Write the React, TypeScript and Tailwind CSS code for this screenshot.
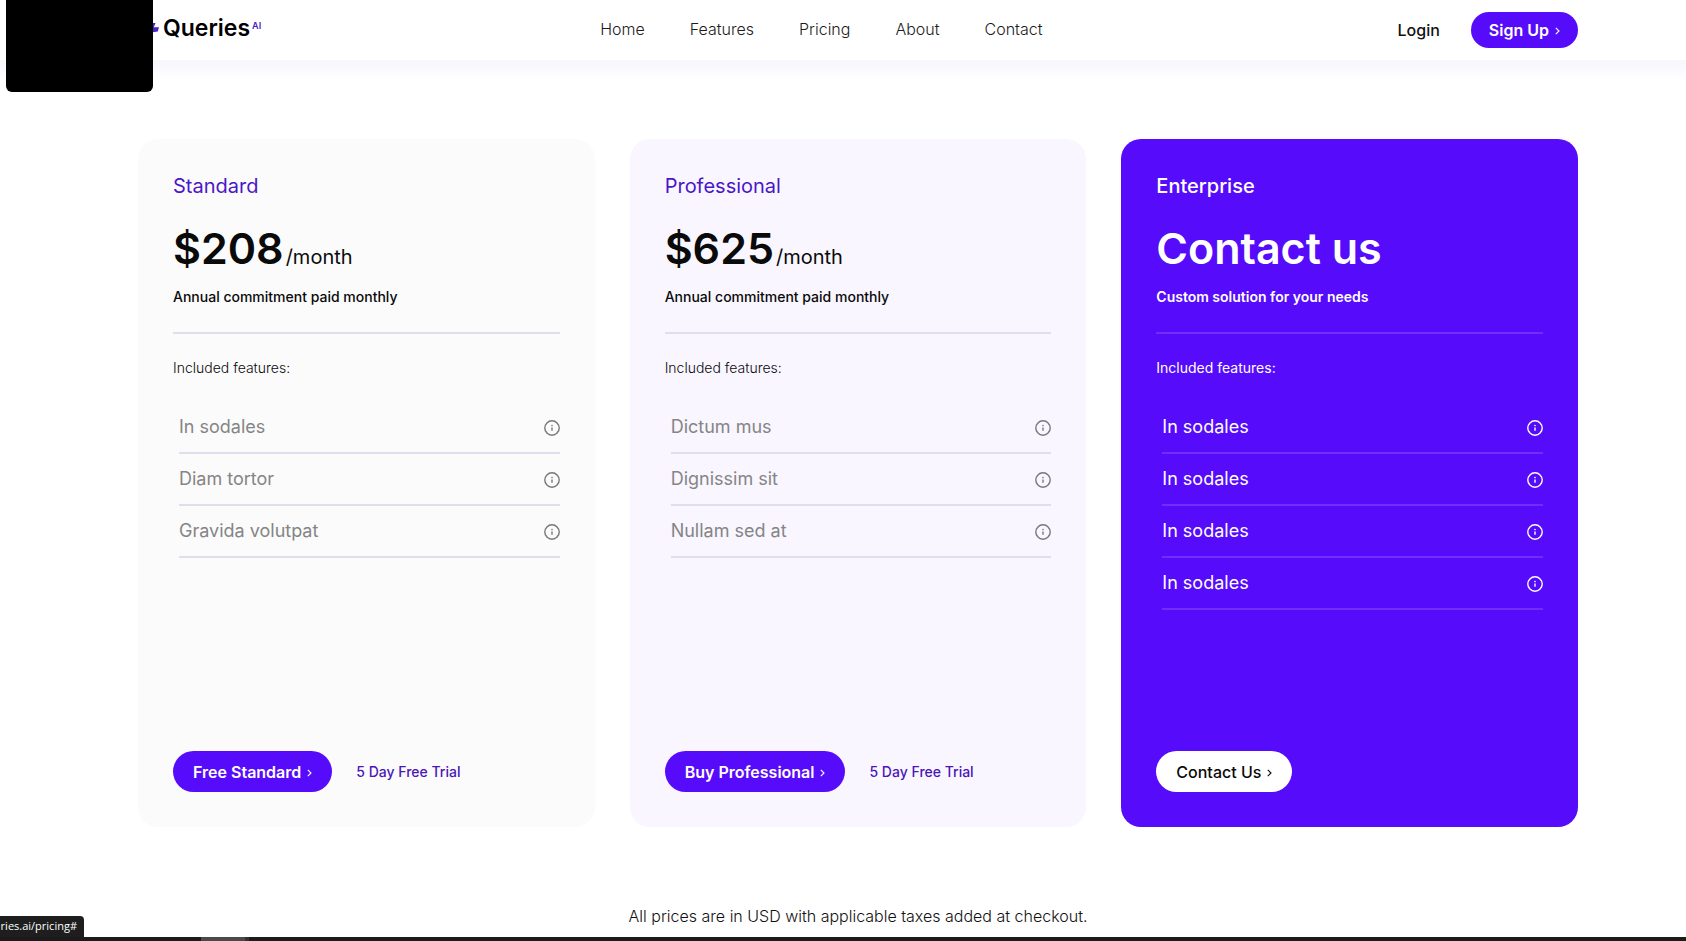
import React from 'react';
import { clsx } from 'clsx';

interface Plan {
  name: string;
  price: string;
  period?: string;
  note: string;
  features: string[];
  cta: string;
  trial?: boolean;
  background: string;
  dark?: boolean;
}

const NAV_LINKS = ['Home', 'Features', 'Pricing', 'About', 'Contact'];

const PLANS: Plan[] = [
  {
    name: 'Standard',
    price: '$208',
    period: '/month',
    note: 'Annual commitment paid monthly',
    features: ['In sodales', 'Diam tortor', 'Gravida volutpat'],
    cta: 'Free Standard',
    trial: true,
    background: 'bg-[#fbfbfc]',
  },
  {
    name: 'Professional',
    price: '$625',
    period: '/month',
    note: 'Annual commitment paid monthly',
    features: ['Dictum mus', 'Dignissim sit', 'Nullam sed at'],
    cta: 'Buy Professional',
    trial: true,
    background: 'bg-[#f9f6ff]',
  },
  {
    name: 'Enterprise',
    price: 'Contact us',
    note: 'Custom solution for your needs',
    features: ['In sodales', 'In sodales', 'In sodales', 'In sodales'],
    cta: 'Contact Us',
    background: 'bg-[#560bfb]',
    dark: true,
  },
];

const InfoIcon: React.FC = () => (
  <svg width="16" height="16" viewBox="0 0 16 16" fill="none" aria-hidden="true">
    <circle cx="8" cy="8" r="7.2" stroke="currentColor" strokeWidth="1.4" />
    <path d="M8 7.4v3.4" stroke="currentColor" strokeWidth="1.4" />
    <circle cx="8" cy="5.6" r="0.8" fill="currentColor" />
  </svg>
);

const Chevron: React.FC = () => (
  <svg width="5" height="8" viewBox="0 0 5 8" fill="none" className="mt-[2px]" aria-hidden="true">
    <path d="M0.8 0.8 4 4 0.8 7.2" stroke="currentColor" strokeWidth="1.1" />
  </svg>
);

const Header: React.FC = () => (
  <header className="relative h-[60px] bg-white shadow-[0_4px_12px_8px_#f8f7fe]">
    <div className="flex h-full items-center justify-between pl-[151px] pr-[108px]">
      <a href="#" className="flex items-center gap-1 pb-1 text-black">
        <svg width="8" height="10" viewBox="0 0 8 10" aria-hidden="true">
          <path d="M0 0h4.6L2.8 4.2H8L6.8 8.4 0 9.4z" fill="#4a22c4" />
        </svg>
        <span className="text-[23px] leading-7 font-semibold">Queries</span>
        <span className="-ml-0.5 pb-1 text-[9px] leading-3 font-semibold text-[#4a22c4]">AI</span>
      </a>
      <nav className="flex gap-[45px] pb-0.5 text-base font-light text-[#1c1c1c]">
        {NAV_LINKS.map((link) => (
          <a key={link} href="#">{link}</a>
        ))}
      </nav>
      <div className="flex items-center gap-[31px] pl-4">
        <a href="#" className="text-base font-medium text-[#111]">Login</a>
        <button className="flex h-9 items-center gap-1.5 rounded-full bg-[#560bfb] px-[18px] text-base font-semibold text-white">
          Sign Up <Chevron />
        </button>
      </div>
    </div>
  </header>
);

const PlanCard: React.FC<{ plan: Plan }> = ({ plan }) => {
  const line = plan.dark ? 'border-[#762cff]' : 'border-[#e0deec]';

  return (
    <article
      className={clsx(
        'flex min-h-[688px] flex-col rounded-[20px] p-[35px]',
        plan.background,
        plan.dark ? 'text-white' : 'text-[#0a0a0a]',
      )}
    >
      <h2 className={clsx('text-xl leading-6', plan.dark ? 'font-medium' : 'text-[#4b16c8]')}>{plan.name}</h2>
      <p className="mt-[22px] flex items-baseline gap-0.5">
        <span className="text-[43px] leading-14 font-semibold">{plan.price}</span>
        {plan.period && <span className="text-xl leading-6">{plan.period}</span>}
      </p>
      <p className={clsx('mt-[11px] text-sm', plan.dark ? 'font-semibold' : 'font-medium')}>{plan.note}</p>
      <hr className={clsx('mt-[25px] border-t-2', line)} />
      <p className={clsx('mt-6 text-sm', plan.dark ? 'font-normal' : 'font-light')}>Included features:</p>
      <ul className={clsx('mt-6 ml-1.5', !plan.dark && 'text-[#858585]')}>
        {plan.features.map((feature, idx) => (
          <li key={idx} className={clsx('flex h-[52px] items-center justify-between border-b-2 text-lg', line)}>
            {feature}
            <button aria-label={`About ${feature}`} className={clsx('pt-0.5', plan.dark ? 'text-white' : 'text-[#777]')}>
              <InfoIcon />
            </button>
          </li>
        ))}
      </ul>
      <div className="mt-auto flex items-center gap-6">
        <button
          className={clsx(
            'flex h-[41px] items-center gap-1.5 rounded-full px-5 text-base',
            plan.dark ? 'bg-white font-medium text-[#0a0a0a]' : 'bg-[#560bfb] font-semibold text-white',
          )}
        >
          {plan.cta} <Chevron />
        </button>
        {plan.trial && <a href="#" className="text-sm font-medium text-[#4b16b8]">5 Day Free Trial</a>}
      </div>
    </article>
  );
};

const App: React.FC = () => {
  return (
    <div className="relative flex min-h-screen flex-col overflow-hidden bg-white font-['Inter',sans-serif]">
      <Header />
      <main className="grow pt-[79px] pr-[108px] pb-2 pl-[138px]">
        <section className="grid grid-cols-3 gap-[35px]">
          {PLANS.map((plan) => (
            <PlanCard key={plan.name} plan={plan} />
          ))}
        </section>
        <p className="mt-[77px] text-center text-base font-light text-[#111]">
          All prices are in USD with applicable taxes added at checkout.
        </p>
      </main>

      {/* Dark block over the logo */}
      <div className="absolute top-0 left-1.5 h-[92px] w-[147px] rounded-b-md bg-black" />

      {/* Link status bubble and the strip along the bottom edge */}
      <div className="absolute inset-x-0 bottom-0">
        <div className="flex h-[21px] w-[84px] items-center justify-end rounded-tr-sm bg-[#1e1e1e] pr-[7px] font-['Open_Sans',sans-serif] text-[11px] whitespace-nowrap text-white">
          ries.ai/pricing#
        </div>
        <div className="h-1 bg-[#1b1b1c] pl-[201px]">
          <div className="h-full w-12 border-r-4 border-[#333] bg-[#4a4a4a]" />
        </div>
      </div>
    </div>
  );
};

export default App;
